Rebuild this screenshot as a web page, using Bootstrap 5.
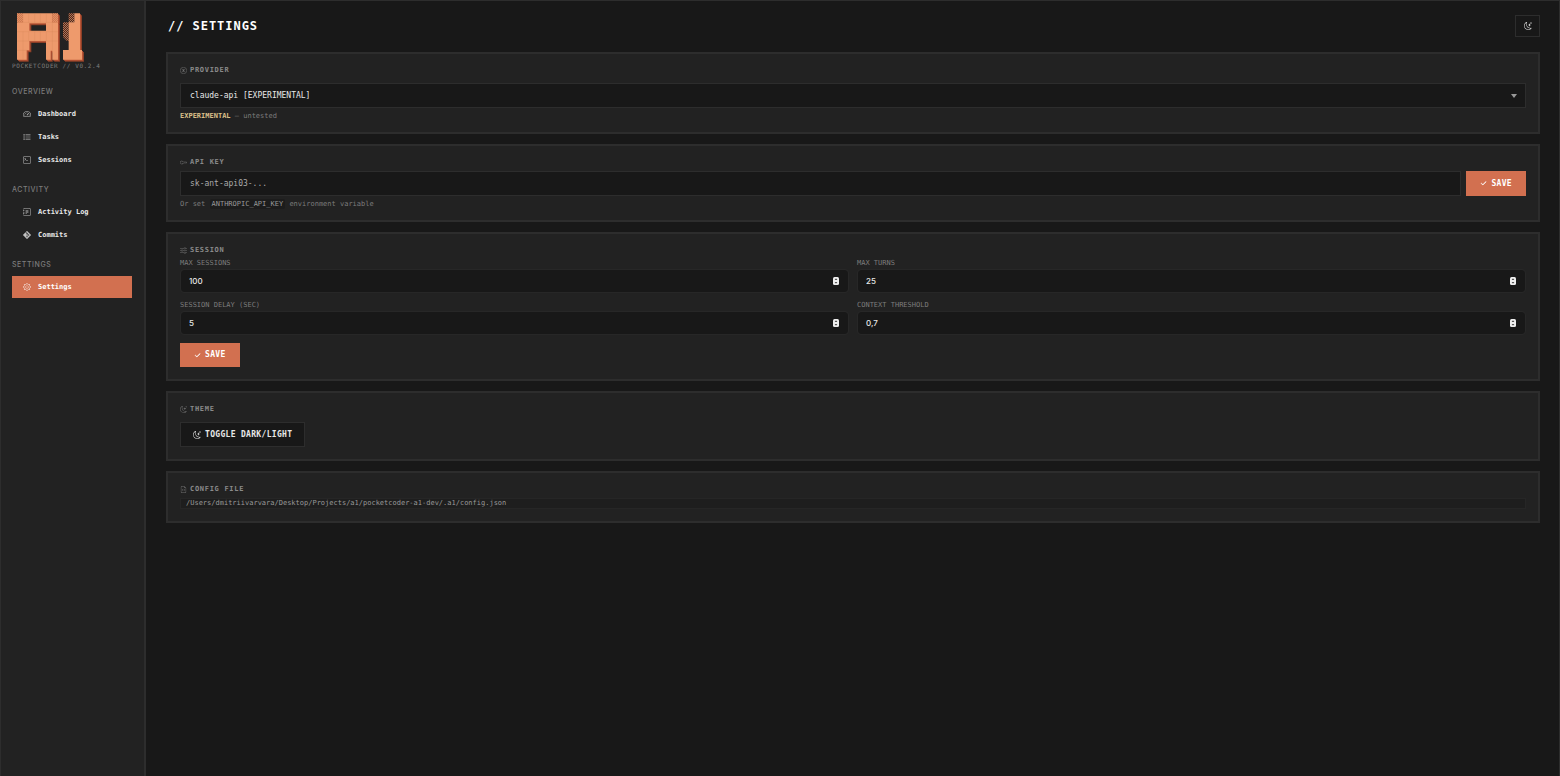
<!DOCTYPE html>
<html lang="en" data-bs-theme="dark">
<head>
<meta charset="utf-8">
<meta name="viewport" content="width=device-width, initial-scale=1">
<title>PocketCoder A1 – Settings</title>
<link href="https://cdn.jsdelivr.net/npm/bootstrap@5.3.0/dist/css/bootstrap.min.css" rel="stylesheet">
<style>
:root{--page:#181818;--panel:#222;--line:#2d2d2d;--muted:#7c7c7c;--text:#e8e8e8;--accent:#d27050;
  --mono:"DejaVu Sans Mono","Liberation Mono",monospace;--sans:Inter,"Liberation Sans",sans-serif}
body{background:var(--page);color:var(--text);font:8px/8px var(--mono);border:1px solid var(--line);border-bottom:0}
svg{fill:currentColor;flex:none;display:block}
.ico{width:8px;height:8px}
.ico-s{width:7px;height:7px}
.sidebar{width:145px;background:var(--panel);border-right:2px solid var(--line);padding:11px 12px 12px 11px}
.version{font-size:6px;letter-spacing:.1em;color:var(--muted);margin:0 0 18px}
.group-title{font:500 7px/8px var(--sans);letter-spacing:.08em;color:var(--muted);margin:14px 0 7px}
.side-link{height:22px;padding:0 11px;gap:7px;margin-bottom:1px;font-size:7px;font-weight:700;color:var(--text);border-radius:0}
.side-link:hover{color:#fff}
.side-link svg{opacity:.8}
.side-link.active{background:var(--accent);color:#fff}
.content{padding:14px 19px 20px 20px;min-width:0}
.topbar{margin-bottom:15px}
.stack{gap:10px}
.keyrow{gap:5px}
.page-title{font-size:12px;line-height:22px;font-weight:700;letter-spacing:.08em;margin:0 0 0 2px}
.panel{background:var(--panel);border:2px solid var(--line);padding:12px}
.panel-title{display:flex;align-items:center;gap:3px;font-size:7px;line-height:8px;font-weight:700;letter-spacing:.1em;color:#8a8a8a;margin:0 0 5px}
.panel-title svg{opacity:.75}
.panel-title.roomy{margin-bottom:9px}
.field,.field:focus{height:25px;min-height:0;padding:0 9px;background-color:var(--page);border:1px solid var(--line);border-radius:0;color:var(--text);font:8px/12px var(--mono)}
.field::placeholder{color:#aaa}
select.field{background-image:url("data:image/svg+xml,%3Csvg xmlns='http://www.w3.org/2000/svg' viewBox='0 0 6 4'%3E%3Cpath fill='%23999' d='M0 0h6L3 4z'/%3E%3C/svg%3E");background-size:6px 4px;background-position:right 8px center}
.num,.num:focus{height:24px;font:500 8px/12px var(--sans);border-radius:4px;border-color:#272727;padding:0 8px}
.num::-webkit-inner-spin-button{appearance:none}
.stepper{right:10px;top:8px;width:6px;height:8px}
.hint{font-size:7px;line-height:8px;color:var(--muted);margin:4px 0 0}
.hint code{font:inherit;color:#999;background:#1c1c1c;border-radius:2px;padding:1px 2px}
.hint strong{color:#dcc08a;font-size:7px}
.num-label{display:block;font-size:7px;line-height:8px;color:var(--muted);margin-bottom:2px}
.pair{display:grid;grid-template-columns:1fr 1fr;gap:8px;margin-bottom:8px}
.act{display:inline-flex;align-items:center;gap:4px;height:24px;padding:0 13px;border-radius:0;font-size:8px;line-height:8px;font-weight:700;letter-spacing:.04em;border:1px solid var(--accent);background:var(--accent);color:#fff}
.act:hover{background:#dd7c5c;border-color:#dd7c5c;color:#fff}
.act.quiet,.act.quiet:hover{background:var(--page);border-color:var(--line);color:var(--text);padding:0 12px}
.act.tall{height:25px}
.act.mini{width:25px;height:22px;justify-content:center}
.path-box{font-size:7px;line-height:9px;color:#999;background:#1e1e1e;border:1px solid #262626;padding:0 5px;display:block;overflow-wrap:anywhere}
</style>
</head>
<body class="d-flex min-vh-100">
<svg width="0" height="0" class="position-absolute" aria-hidden="true">
  <symbol id="moon" viewBox="0 0 16 16"><path d="M6 .278a.77.77 0 0 1 .08.858 7.2 7.2 0 0 0-.878 3.46c0 4.021 3.278 7.277 7.318 7.277q.792-.001 1.533-.16a.79.79 0 0 1 .81.316.73.73 0 0 1-.031.893A8.35 8.35 0 0 1 8.344 16C3.734 16 0 12.286 0 7.71 0 4.266 2.114 1.312 5.124.06A.75.75 0 0 1 6 .278M4.858 1.311A7.27 7.27 0 0 0 1.025 7.71c0 4.02 3.279 7.276 7.319 7.276a7.32 7.32 0 0 0 5.205-2.162q-.506.063-1.029.063c-4.61 0-8.343-3.714-8.343-8.29 0-1.167.242-2.278.681-3.286"/><path d="M10.794 3.148a.217.217 0 0 1 .412 0l.387 1.162c.173.518.579.924 1.097 1.097l1.162.387a.217.217 0 0 1 0 .412l-1.162.387a1.73 1.73 0 0 0-1.097 1.097l-.387 1.162a.217.217 0 0 1-.412 0l-.387-1.162A1.73 1.73 0 0 0 9.31 6.593l-1.162-.387a.217.217 0 0 1 0-.412l1.162-.387a1.73 1.73 0 0 0 1.097-1.097zM13.863.099a.145.145 0 0 1 .274 0l.258.774c.115.346.386.617.732.732l.774.258a.145.145 0 0 1 0 .274l-.774.258a1.16 1.16 0 0 0-.732.732l-.258.774a.145.145 0 0 1-.274 0l-.258-.774a1.16 1.16 0 0 0-.732-.732l-.774-.258a.145.145 0 0 1 0-.274l.774-.258c.346-.115.617-.386.732-.732z"/></symbol>
  <symbol id="check" viewBox="0 0 16 16"><path d="M13.854 3.646a.5.5 0 0 1 0 .708l-7 7a.5.5 0 0 1-.708 0l-3.5-3.5a.5.5 0 1 1 .708-.708L6.5 10.293l6.646-6.647a.5.5 0 0 1 .708 0" stroke="currentColor"/></symbol>
  <symbol id="spin" viewBox="0 0 6 8"><rect width="6" height="8" rx="1.500" fill="#eee"/><path d="M2 3l1-1.200L4 3M2 5l1 1.200L4 5" fill="none" stroke="#222" stroke-width=".8"/></symbol>
</svg>

<aside class="sidebar flex-shrink-0">
  <svg width="77" height="50" viewBox="0 0 231 150" role="img" aria-label="A1">
    <defs>
      <pattern id="dots" width="6" height="6" patternUnits="userSpaceOnUse"><path d="M0 0l6 6M-1 5l2 2M5-1l2 2" stroke="#ee9a6c" stroke-width="2"/></pattern>
      <path id="solid" d="M33 4h88v27h17v112h-17v-27h-5v27h-14v-56H52v28h-8v28H15V31h18zM52 34v22h50V34zM187 4h17v110h6v29h-57v-29h17V31h17z" fill-rule="evenodd"/>
      <path id="shade" d="M170 4h17v27h-17zM153 31h17v56h-5l-12-12z"/>
      <path id="corner" d="M15 4h18v27H15zM121 4h17v27h-17z"/>
    </defs>
    <g fill="#8c3f27"><use href="#solid" x="6" y="6"/><use href="#corner" x="6" y="6"/></g>
    <g fill="#b85436"><use href="#solid" x="3" y="3"/><use href="#corner" x="3" y="3"/></g>
    <use href="#shade" fill="#4a2a20"/>
    <use href="#corner" fill="#cf7b52"/>
    <use href="#shade" fill="url(#dots)"/>
    <use href="#corner" fill="url(#dots)"/>
    <use href="#solid" fill="#ee9a6c"/>
    <path d="M15 31h123M15 59h123M15 87h123M15 115h29M33 4v27M50 4v28M68 4v28M85 4v28M103 4v28M121 4v28M33 59v84M50 59v28M68 59v28M85 59v28M103 59v28M121 31v84" stroke="#c7794f" stroke-width="1" opacity=".55" fill="none"/>
  </svg>
  <p class="version">POCKETCODER // V0.2.4</p>

  <nav aria-label="Main">
    <h2 class="group-title">OVERVIEW</h2>
    <div class="nav flex-column">
      <a href="#dashboard" class="nav-link side-link d-flex align-items-center"><svg class="ico" viewBox="0 0 16 16"><path d="M8 4a.5.5 0 0 1 .5.5V6a.5.5 0 0 1-1 0V4.500A.5.5 0 0 1 8 4M3.732 5.732a.5.5 0 0 1 .707 0l.915.914a.5.5 0 1 1-.708.708l-.914-.915a.5.5 0 0 1 0-.707M2 10a.5.5 0 0 1 .5-.5h1.586a.5.5 0 0 1 0 1H2.500A.5.5 0 0 1 2 10m9.500 0a.5.5 0 0 1 .5-.5h1.500a.5.5 0 0 1 0 1H12a.5.5 0 0 1-.5-.5m.754-4.246a.39.39 0 0 0-.527-.020L7.547 9.310a.91.91 0 1 0 1.302 1.258l3.434-4.297a.39.39 0 0 0-.029-.518z"/><path fill-rule="evenodd" d="M0 10a8 8 0 1 1 15.547 2.661c-.442 1.253-1.845 1.602-2.932 1.250C11.309 13.488 9.475 13 8 13c-1.474 0-3.310.488-4.615.911-1.087.352-2.490.003-2.932-1.250A8 8 0 0 1 0 10m8-7a7 7 0 0 0-6.603 9.329c.203.575.923.876 1.680.630C4.397 12.533 6.358 12 8 12s3.604.532 4.923.960c.757.245 1.477-.056 1.680-.631A7 7 0 0 0 8 3"/></svg>Dashboard</a>
      <a href="#tasks" class="nav-link side-link d-flex align-items-center"><svg class="ico" viewBox="0 0 16 16"><path d="M5 3h10v1.300H5zM5 7.300h10v1.300H5zM5 11.600h10v1.300H5zM1 2.500h2.300v2.300H1zM1 6.800h2.300v2.300H1zM1 11.100h2.300v2.300H1z"/></svg>Tasks</a>
      <a href="#sessions" class="nav-link side-link d-flex align-items-center"><svg class="ico" viewBox="0 0 16 16"><path d="M6 9a.5.5 0 0 1 .5-.5h3a.5.5 0 0 1 0 1h-3A.5.5 0 0 1 6 9M3.854 4.146a.5.5 0 1 0-.708.708L4.793 6.500 3.146 8.146a.5.5 0 1 0 .708.708l2-2a.5.5 0 0 0 0-.708z"/><path d="M2 1a2 2 0 0 0-2 2v10a2 2 0 0 0 2 2h12a2 2 0 0 0 2-2V3a2 2 0 0 0-2-2zm12 1a1 1 0 0 1 1 1v10a1 1 0 0 1-1 1H2a1 1 0 0 1-1-1V3a1 1 0 0 1 1-1z"/></svg>Sessions</a>
    </div>
    <h2 class="group-title">ACTIVITY</h2>
    <div class="nav flex-column">
      <a href="#activity" class="nav-link side-link d-flex align-items-center"><svg class="ico" viewBox="0 0 16 16"><path d="M5 10.500a.5.5 0 0 1 .5-.5h2a.5.5 0 0 1 0 1h-2a.5.5 0 0 1-.5-.5m0-2a.5.5 0 0 1 .5-.5h5a.5.5 0 0 1 0 1h-5a.5.5 0 0 1-.5-.5m0-2a.5.5 0 0 1 .5-.5h5a.5.5 0 0 1 0 1h-5a.5.5 0 0 1-.5-.5m0-2a.5.5 0 0 1 .5-.5h5a.5.5 0 0 1 0 1h-5a.5.5 0 0 1-.5-.5"/><path d="M3 0h10a2 2 0 0 1 2 2v12a2 2 0 0 1-2 2H3a2 2 0 0 1-2-2v-1h1v1a1 1 0 0 0 1 1h10a1 1 0 0 0 1-1V2a1 1 0 0 0-1-1H3a1 1 0 0 0-1 1v1H1V2a2 2 0 0 1 2-2"/><path d="M1 5v-.5a.5.5 0 0 1 1 0V5h.5a.5.5 0 0 1 0 1h-2a.5.5 0 0 1 0-1zm0 3v-.5a.5.5 0 0 1 1 0V8h.5a.5.5 0 0 1 0 1h-2a.5.5 0 0 1 0-1zm0 3v-.5a.5.5 0 0 1 1 0v.5h.5a.5.5 0 0 1 0 1h-2a.5.5 0 0 1 0-1z"/></svg>Activity Log</a>
      <a href="#commits" class="nav-link side-link d-flex align-items-center"><svg class="ico" viewBox="0 0 16 16"><path d="M15.698 7.287 8.712.302a1.030 1.030 0 0 0-1.457 0l-1.450 1.450 1.840 1.840a1.223 1.223 0 0 1 1.550 1.560l1.773 1.774a1.224 1.224 0 0 1 1.267 2.025 1.226 1.226 0 0 1-2.002-1.334L8.580 5.963v4.353a1.226 1.226 0 1 1-1.008-.036V5.887a1.226 1.226 0 0 1-.666-1.608L5.093 2.465l-4.790 4.790a1.030 1.030 0 0 0 0 1.457l6.986 6.986a1.030 1.030 0 0 0 1.457 0l6.953-6.953a1.030 1.030 0 0 0 0-1.457"/></svg>Commits</a>
    </div>
    <h2 class="group-title">SETTINGS</h2>
    <div class="nav flex-column">
      <a href="#settings" class="nav-link side-link active d-flex align-items-center" aria-current="page"><svg class="ico" viewBox="0 0 16 16"><path d="M8 4.754a3.246 3.246 0 1 0 0 6.492 3.246 3.246 0 0 0 0-6.492M5.754 8a2.246 2.246 0 1 1 4.492 0 2.246 2.246 0 0 1-4.492 0"/><path d="M9.796 1.343c-.527-1.790-3.065-1.790-3.592 0l-.094.319a.873.873 0 0 1-1.255.520l-.292-.160c-1.640-.892-3.433.902-2.540 2.541l.159.292a.873.873 0 0 1-.520 1.255l-.319.094c-1.790.527-1.790 3.065 0 3.592l.319.094a.873.873 0 0 1 .520 1.255l-.160.292c-.892 1.640.901 3.434 2.541 2.540l.292-.159a.873.873 0 0 1 1.255.520l.094.319c.527 1.790 3.065 1.790 3.592 0l.094-.319a.873.873 0 0 1 1.255-.520l.292.160c1.640.893 3.434-.902 2.540-2.541l-.159-.292a.873.873 0 0 1 .520-1.255l.319-.094c1.790-.527 1.790-3.065 0-3.592l-.319-.094a.873.873 0 0 1-.520-1.255l.160-.292c.893-1.640-.902-3.433-2.541-2.540l-.292.159a.873.873 0 0 1-1.255-.520zm-2.633.283c.246-.835 1.428-.835 1.674 0l.094.319a1.873 1.873 0 0 0 2.693 1.115l.291-.160c.764-.415 1.600.420 1.184 1.185l-.159.292a1.873 1.873 0 0 0 1.116 2.692l.318.094c.835.246.835 1.428 0 1.674l-.319.094a1.873 1.873 0 0 0-1.115 2.693l.160.291c.415.764-.420 1.600-1.185 1.184l-.291-.159a1.873 1.873 0 0 0-2.693 1.116l-.094.318c-.246.835-1.428.835-1.674 0l-.094-.319a1.873 1.873 0 0 0-2.692-1.115l-.292.160c-.764.415-1.600-.420-1.184-1.185l.159-.291A1.873 1.873 0 0 0 1.945 8.930l-.319-.094c-.835-.246-.835-1.428 0-1.674l.319-.094A1.873 1.873 0 0 0 3.060 4.377l-.160-.292c-.415-.764.420-1.600 1.185-1.184l.292.159a1.873 1.873 0 0 0 2.692-1.115z"/></svg>Settings</a>
    </div>
  </nav>
</aside>

<main class="content flex-grow-1 d-flex flex-column">
  <header class="topbar d-flex justify-content-between align-items-center">
    <h1 class="page-title">// SETTINGS</h1>
    <button type="button" class="btn act quiet mini p-0" aria-label="Toggle theme"><svg class="ico"><use href="#moon"/></svg></button>
  </header>

  <div class="d-grid stack">
    <section class="panel">
      <h2 class="panel-title roomy"><svg class="ico-s" viewBox="0 0 16 16"><circle cx="8" cy="8" r="7.300" fill="none" stroke="currentColor" stroke-width="1.300"/><path d="M4.500 4.500h7v1.200h-7zM4.500 10.300h7v1.200h-7z"/><circle cx="8" cy="8" r="1.800"/></svg><label for="provider">PROVIDER</label></h2>
      <select id="provider" class="form-select field"><option>claude-api [EXPERIMENTAL]</option></select>
      <p class="hint"><strong>EXPERIMENTAL</strong> — untested</p>
    </section>

    <section class="panel">
      <h2 class="panel-title"><svg class="ico-s" viewBox="0 0 16 16"><path d="M0 8a4 4 0 0 1 7.465-2H14a.5.5 0 0 1 .354.146l1.500 1.500a.5.5 0 0 1 0 .708l-1.500 1.500a.5.5 0 0 1-.708 0L13 9.207l-.646.647a.5.5 0 0 1-.708 0L11 9.207l-.646.647a.5.5 0 0 1-.708 0L9 9.207l-.646.647A.5.5 0 0 1 8 10h-.535A4 4 0 0 1 0 8m4-3a3 3 0 1 0 2.712 4.285A.5.5 0 0 1 7.163 9h.630l.853-.854a.5.5 0 0 1 .708 0l.646.647.646-.647a.5.5 0 0 1 .708 0l.646.647.646-.647a.5.5 0 0 1 .708 0l.646.647.793-.793-1-1h-6.630a.5.5 0 0 1-.451-.285A3 3 0 0 0 4 5"/></svg><label for="apikey">API KEY</label></h2>
      <div class="d-flex keyrow">
        <input id="apikey" type="text" class="form-control field" placeholder="sk-ant-api03-...">
        <button type="button" class="btn act tall"><svg class="ico-s"><use href="#check"/></svg>SAVE</button>
      </div>
      <p class="hint">Or set <code>ANTHROPIC_API_KEY</code> environment variable</p>
    </section>

    <section class="panel">
      <h2 class="panel-title"><svg class="ico-s" viewBox="0 0 16 16"><path d="M0 2.500h9v1.200H0zM13 2.500h3v1.200h-3zM0 7.500h3v1.200H0zM7 7.500h9v1.200H7zM0 12.500h9v1.200H0zM13 12.500h3v1.200h-3z"/><path d="M9.500 1.500h3v3.200h-3zM3.500 6.500h3v3.200h-3zM9.500 11.500h3v3.200h-3z" fill="none" stroke="currentColor"/></svg>SESSION</h2>
      <form>
        <div class="pair">
          <div><label class="num-label" for="maxs">MAX SESSIONS</label><div class="position-relative"><input id="maxs" type="number" class="form-control field num" value="100"><svg class="stepper position-absolute"><use href="#spin"/></svg></div></div>
          <div><label class="num-label" for="maxt">MAX TURNS</label><div class="position-relative"><input id="maxt" type="number" class="form-control field num" value="25"><svg class="stepper position-absolute"><use href="#spin"/></svg></div></div>
          <div><label class="num-label" for="delay">SESSION DELAY (SEC)</label><div class="position-relative"><input id="delay" type="number" class="form-control field num" value="5"><svg class="stepper position-absolute"><use href="#spin"/></svg></div></div>
          <div><label class="num-label" for="ctx">CONTEXT THRESHOLD</label><div class="position-relative"><input id="ctx" type="text" inputmode="decimal" class="form-control field num" value="0,7"><svg class="stepper position-absolute"><use href="#spin"/></svg></div></div>
        </div>
        <button type="button" class="btn act d-flex"><svg class="ico-s"><use href="#check"/></svg>SAVE</button>
      </form>
    </section>

    <section class="panel">
      <h2 class="panel-title roomy"><svg class="ico-s"><use href="#moon"/></svg>THEME</h2>
      <button type="button" class="btn act quiet tall d-flex"><svg class="ico"><use href="#moon"/></svg>TOGGLE DARK/LIGHT</button>
    </section>

    <section class="panel">
      <h2 class="panel-title"><svg class="ico-s" viewBox="0 0 16 16"><path d="M14 4.500V14a2 2 0 0 1-2 2H4a2 2 0 0 1-2-2V2a2 2 0 0 1 2-2h5.500zm-3 0A1.500 1.500 0 0 1 9.500 3V1H4a1 1 0 0 0-1 1v12a1 1 0 0 0 1 1h8a1 1 0 0 0 1-1V4.500z"/><path d="M8.646 6.646a.5.5 0 0 1 .708 0l2 2a.5.5 0 0 1 0 .708l-2 2a.5.5 0 0 1-.708-.708L10.293 9 8.646 7.354a.5.5 0 0 1 0-.708m-1.292 0a.5.5 0 0 0-.708 0l-2 2a.5.5 0 0 0 0 .708l2 2a.5.5 0 0 0 .708-.708L5.707 9l1.647-1.646a.5.5 0 0 0 0-.708"/></svg>CONFIG FILE</h2>
      <span class="path-box">/Users/dmitriivarvara/Desktop/Projects/a1/pocketcoder-a1-dev/.a1/config.json</span>
    </section>
  </div>
</main>
<script src="https://cdn.jsdelivr.net/npm/bootstrap@5.3.0/dist/js/bootstrap.bundle.min.js"></script>
</body>
</html>
